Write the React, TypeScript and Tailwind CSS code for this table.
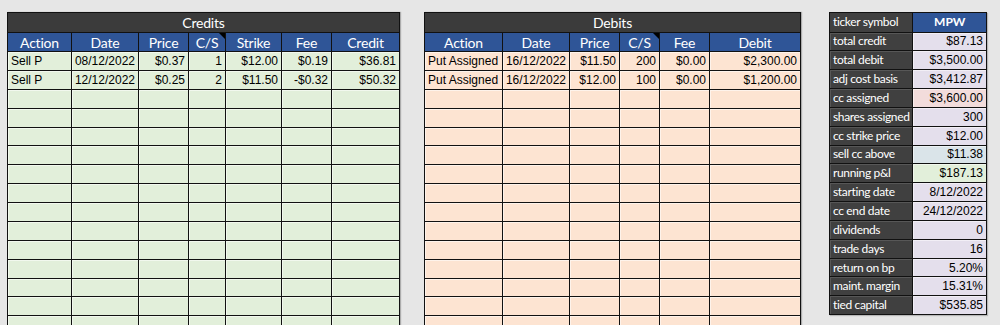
const GREEN = 'bg-[#e2efda]'
const PEACH = 'bg-[#fde4d2]'

type Col = { name: string; w: string; align: 'left' | 'right'; note?: boolean }

const creditCols: Col[] = [
  { name: 'Action', w: 'w-[64px]', align: 'left' },
  { name: 'Date', w: 'w-[67px]', align: 'right' },
  { name: 'Price', w: 'w-[50px]', align: 'right' },
  { name: 'C/S', w: 'w-[37px]', align: 'right', note: true },
  { name: 'Strike', w: 'w-[56px]', align: 'right' },
  { name: 'Fee', w: 'w-[50px]', align: 'right' },
  { name: 'Credit', w: 'w-[68px]', align: 'right' },
]

const creditRows = [
  ['Sell P', '08/12/2022', '$0.37', '1', '$12.00', '$0.19', '$36.81'],
  ['Sell P', '12/12/2022', '$0.25', '2', '$11.50', '-$0.32', '$50.32'],
]

const debitCols: Col[] = [
  { name: 'Action', w: 'w-[78px]', align: 'left' },
  { name: 'Date', w: 'w-[67px]', align: 'right' },
  { name: 'Price', w: 'w-[50px]', align: 'right' },
  { name: 'C/S', w: 'w-[40px]', align: 'right', note: true },
  { name: 'Fee', w: 'w-[50px]', align: 'right' },
  { name: 'Debit', w: 'w-[91px]', align: 'right' },
]

const debitRows = [
  ['Put Assigned', '16/12/2022', '$11.50', '200', '$0.00', '$2,300.00'],
  ['Put Assigned', '16/12/2022', '$12.00', '100', '$0.00', '$1,200.00'],
]

// label, value, cell colour
const summary: [string, string, string][] = [
  ['total credit', '$87.13', 'bg-[#e4dfec]'],
  ['total debit', '$3,500.00', 'bg-[#e4dfec]'],
  ['adj cost basis', '$3,412.87', 'bg-[#e4dfec]'],
  ['cc assigned', '$3,600.00', 'bg-[#f2dcdb]'],
  ['shares assigned', '300', 'bg-[#e4dfec]'],
  ['cc strike price', '$12.00', 'bg-[#e4dfec]'],
  ['sell cc above', '$11.38', 'bg-[#dae4e9]'],
  ['running p&l', '$187.13', 'bg-[#e2efda]'],
  ['starting date', '8/12/2022', 'bg-[#e4dfec]'],
  ['cc end date', '24/12/2022', 'bg-[#e4dfec]'],
  ['dividends', '0', 'bg-[#e4dfec]'],
  ['trade days', '16', 'bg-[#e4dfec]'],
  ['return on bp', '5.20%', 'bg-[#e4dfec]'],
  ['maint. margin', '15.31%', 'bg-[#e4dfec]'],
  ['tied capital', '$535.85', 'bg-[#e4dfec]'],
]

function Sheet({ title, cols, rows, fill }: { title: string; cols: Col[]; rows: string[][]; fill: string }) {
  const empty = 15 - rows.length
  return (
    <div className="flex flex-col border-t border-l border-[#111] shadow-[1px_0_1px_rgba(0,0,0,0.25)]">
      <div className="h-[20px] flex items-center justify-center bg-[#3b3b3b] border-r border-b border-[#111] text-white text-[14px] tracking-[-0.2px] font-['Lato',sans-serif]">
        {title}
      </div>
      <div className="flex h-[19px] bg-[#2f5597] border-b border-[#111]">
        {cols.map((c) => (
          <div
            key={c.name}
            className={`${c.w} relative flex items-center justify-center pt-px border-r border-[#111] text-white text-[14px] tracking-[-0.2px] font-['Lato',sans-serif]`}
          >
            {c.name}
            {c.note && (
              <span className="absolute top-0 right-0 w-0 h-0 border-l-[6px] border-l-transparent border-t-[6px] border-t-black" />
            )}
          </div>
        ))}
      </div>
      {rows.map((r, i) => (
        <div key={i} className={`flex h-[18.875px] border-b border-[#111] ${fill}`}>
          {r.map((v, j) => (
            <div
              key={j}
              className={`${cols[j].w} flex items-center px-[3px] border-r border-[#111] shadow-[inset_1px_1px_0_rgba(255,255,255,0.55)] text-[12px] text-black font-['Liberation_Sans',Arial,sans-serif] whitespace-nowrap ${cols[j].align === 'left' ? 'justify-start' : 'justify-end'}`}
            >
              {v}
            </div>
          ))}
        </div>
      ))}
      {Array.from({ length: empty }).map((_, i) => (
        <div key={'e' + i} className={`flex h-[18.875px] border-b border-[#111] ${fill}`}>
          {cols.map((c) => (
            <div key={c.name} className={`${c.w} border-r border-[#111] shadow-[inset_1px_1px_0_rgba(255,255,255,0.55)]`} />
          ))}
        </div>
      ))}
    </div>
  )
}

function Summary() {
  return (
    <div className="w-[158px] flex flex-col border-t border-l border-[#111] shadow-[1px_1px_1px_rgba(0,0,0,0.2)]">
      <div className="flex h-[19.5px] border-b border-[#111]">
        <div className="w-[84px] flex items-center pl-[3px] bg-[#404040] border-r border-[#111] text-white text-[12px] tracking-[-0.35px] font-['Lato',sans-serif] whitespace-nowrap">
          ticker symbol
        </div>
        <div className="w-[74px] flex items-center justify-center bg-[#2f5597] border-r border-[#111] text-white text-[12px] font-bold font-['Lato',sans-serif]">
          MPW
        </div>
      </div>
      {summary.map(([label, value, bg]) => (
        <div key={label} className="flex h-[18.85px] border-b border-[#111]">
          <div className="w-[84px] flex items-center pl-[3px] bg-[#404040] border-r border-[#111] shadow-[inset_1px_1px_0_rgba(255,255,255,0.12)] text-white text-[12px] tracking-[-0.35px] font-['Lato',sans-serif] whitespace-nowrap overflow-hidden">
            {label}
          </div>
          <div
            className={`w-[74px] flex items-center justify-end pr-[3px] ${bg} border-r border-[#111] shadow-[inset_1px_1px_0_rgba(255,255,255,0.5)] text-black text-[12px] font-['Liberation_Sans',Arial,sans-serif]`}
          >
            {value}
          </div>
        </div>
      ))}
    </div>
  )
}

export default function App() {
  return (
    <div className="w-[1000px] h-[325px] overflow-hidden bg-[#e6e6e6] flex items-start pt-[12px] pl-[7px]">
      <Sheet title="Credits" cols={creditCols} rows={creditRows} fill={GREEN} />
      <div className="ml-[24px]">
        <Sheet title="Debits" cols={debitCols} rows={debitRows} fill={PEACH} />
      </div>
      <div className="ml-[28px]">
        <Summary />
      </div>
    </div>
  )
}
